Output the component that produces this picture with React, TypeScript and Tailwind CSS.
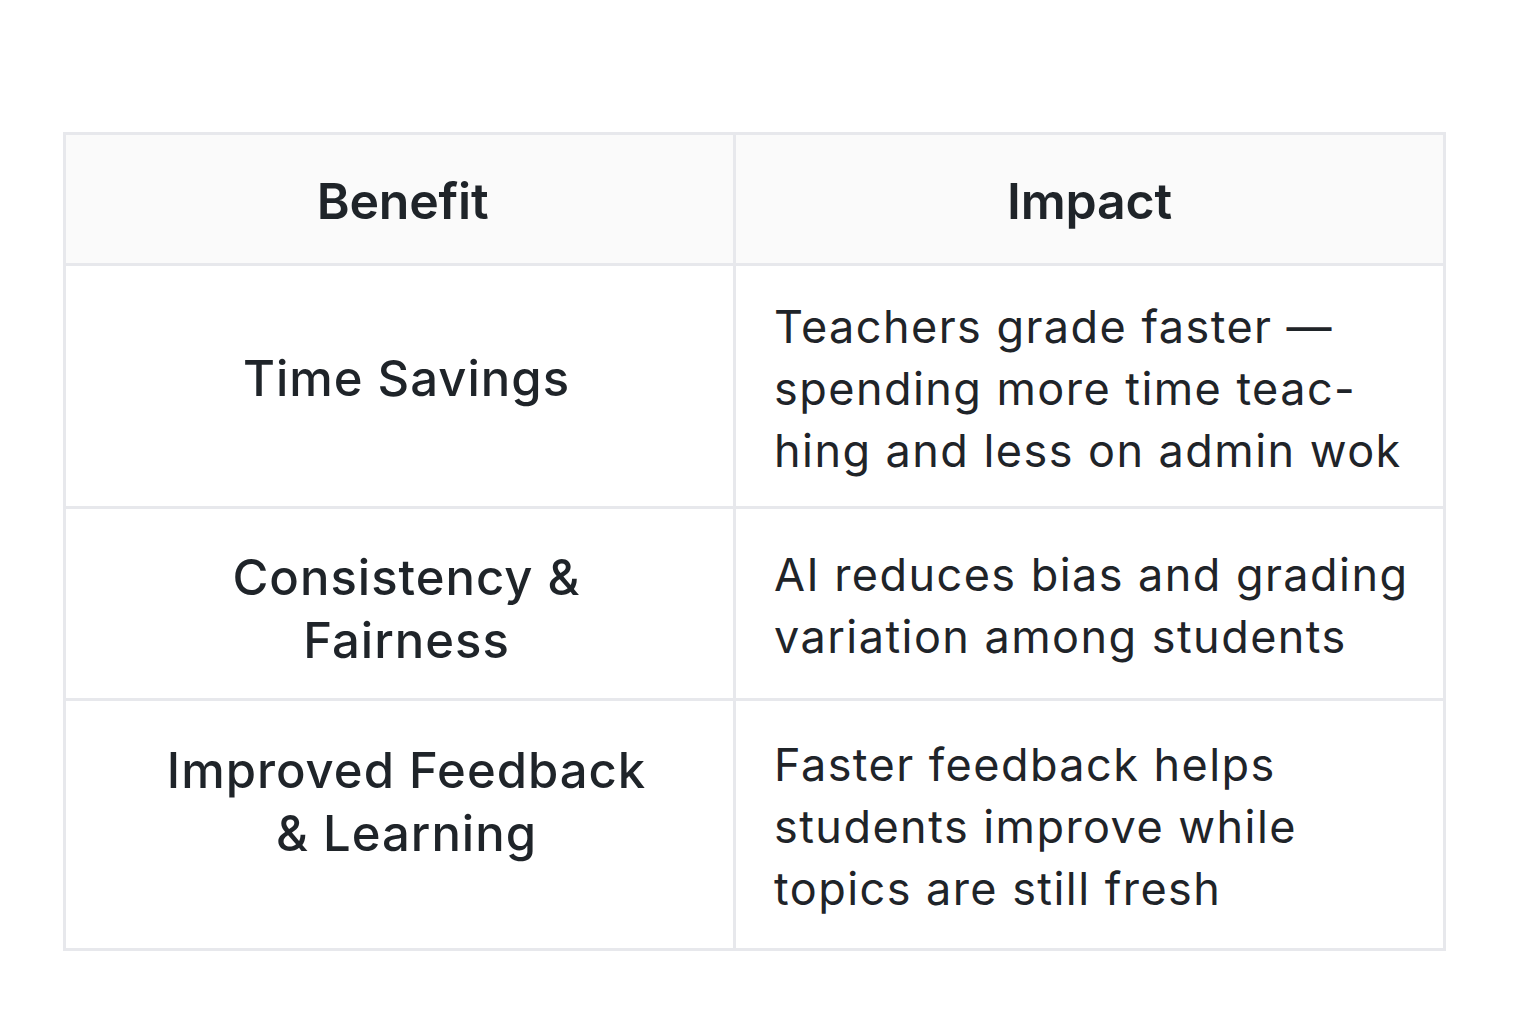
import React from "react";

const rows = [
  { h: "h-[243px]", lp: "pb-[16px]", label: ["Time Savings"], impact: ["Teachers grade faster —", "spending more time teac-", "hing and less on admin wok"] },
  { h: "h-[192px]", lp: "pt-[10px]", label: ["Consistency &", "Fairness"], impact: ["AI reduces bias and grading", "variation among students"] },
  { h: "h-[247px]", lp: "pb-[46px]", label: ["Improved Feedback", "& Learning"], impact: ["Faster feedback helps", "students improve while", "topics are still fresh"] },
];

export default function App() {
  return (
    <div className="w-[1536px] h-[1024px] bg-white pt-[132px] pl-[63px] text-[#1f2429]" style={{ fontFamily: "Inter, 'Noto Sans', sans-serif" }}>
      <div className="w-[1383px] border-[3px] border-[#e7e8ec] grid grid-cols-[670px_707px]">
        <div className="h-[131px] bg-[#fafafa] border-r-[3px] border-b-[3px] border-[#e7e8ec] flex items-center justify-center pt-[4px] pl-[6px] text-[50px] font-semibold tracking-[-0.2px]">
          Benefit
        </div>
        <div className="h-[131px] bg-[#fafafa] border-b-[3px] border-[#e7e8ec] flex items-center justify-center pt-[4px] text-[50px] font-semibold tracking-[-0.2px]">
          Impact
        </div>
        {rows.map((r, i) => (
          <React.Fragment key={i}>
            <div className={`${r.h} ${r.lp} border-r-[3px] ${i < rows.length - 1 ? "border-b-[3px]" : ""} border-[#e7e8ec] flex flex-col items-center justify-center text-[49px] font-medium leading-[63px] tracking-[1px] text-center pl-[14px]`}>
              {r.label.map((l, j) => (
                <span key={j} className="whitespace-nowrap">{l}</span>
              ))}
            </div>
            <div className={`${r.h} ${i < rows.length - 1 ? "border-b-[3px]" : ""} border-[#e7e8ec] flex flex-col justify-center pl-[38px] pt-[5px] text-[45px] leading-[62px] tracking-[1.45px]`}>
              {r.impact.map((l, j) => (
                <span key={j} className="whitespace-nowrap">{l}</span>
              ))}
            </div>
          </React.Fragment>
        ))}
      </div>
    </div>
  );
}
